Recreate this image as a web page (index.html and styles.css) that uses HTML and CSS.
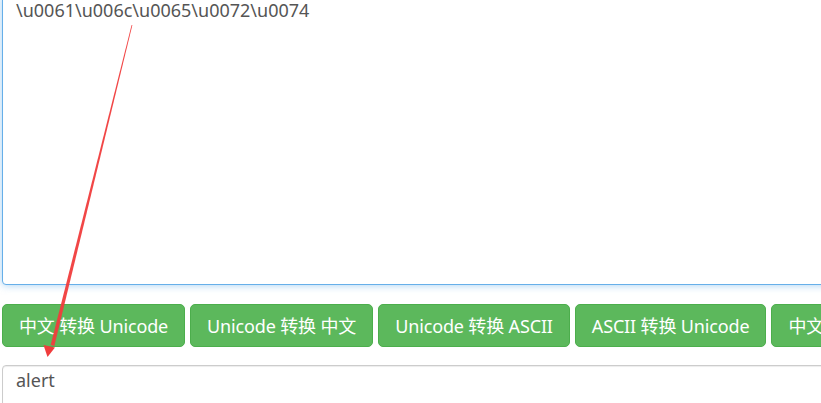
FILE: index.html
```html
<!DOCTYPE html>
<html lang="zh-CN">
<head>
<meta charset="utf-8">
<title>Unicode 转换</title>
<link rel="stylesheet" href="styles.css">
</head>
<body>
<div class="page">
  <div class="field field-source">\u0061\u006c\u0065\u0072\u0074</div>
  <div class="actions">
    <button class="btn">中文 转换 Unicode</button>
    <button class="btn">Unicode 转换 中文</button>
    <button class="btn">Unicode 转换 ASCII</button>
    <button class="btn">ASCII 转换 Unicode</button>
    <button class="btn">中文 转换 ASCII</button>
  </div>
  <div class="field field-result">alert</div>
</div>
<svg class="annotation" width="821" height="403" viewBox="0 0 821 403">
  <polygon points="131.6,25 132.4,25 54.3,346 50.7,345" fill="#f03c3c" opacity="0.95"/>
  <polygon points="47.5,357 43.5,345 55,347.5" fill="#f03c3c"/>
</svg>
</body>
</html>
```

FILE: styles.css
```css
html, body {
  margin: 0;
  padding: 0;
  overflow: hidden;
  background: #fff;
}

body {
  width: 821px;
  height: 403px;
  position: relative;
  font-family: "Noto Sans", "Noto Sans CJK SC", sans-serif;
}

.page {
  width: 1100px;
  padding-left: 2px;
  display: flex;
  flex-direction: column;
  margin-top: -5px;
}

.field {
  box-sizing: border-box;
  border: 1px solid #ccc;
  border-radius: 4px;
  padding: 2px 13px;
  font-size: 18px;
  line-height: 24px;
  color: #555;
  background: #fff;
  box-shadow: inset 0 1px 1px rgba(0, 0, 0, .075);
}

.field-source {
  height: 290px;
  border-color: #66afe9;
  box-shadow: inset 0 1px 1px rgba(0, 0, 0, .075), 0 0 8px rgba(102, 175, 233, .6);
}

.field-result {
  height: 60px;
}

.actions {
  display: flex;
  gap: 5px;
  margin: 19px 0 18px;
}

.btn {
  box-sizing: border-box;
  height: 43px;
  padding: 0 16px;
  border: 1px solid #4cae4c;
  border-radius: 5px;
  background: #5cb85c;
  color: #fff;
  font-family: inherit;
  font-size: 18px;
  letter-spacing: -0.15px;
  line-height: 24px;
  white-space: nowrap;
}

.annotation {
  position: absolute;
  left: 0;
  top: 0;
  pointer-events: none;
}
```
